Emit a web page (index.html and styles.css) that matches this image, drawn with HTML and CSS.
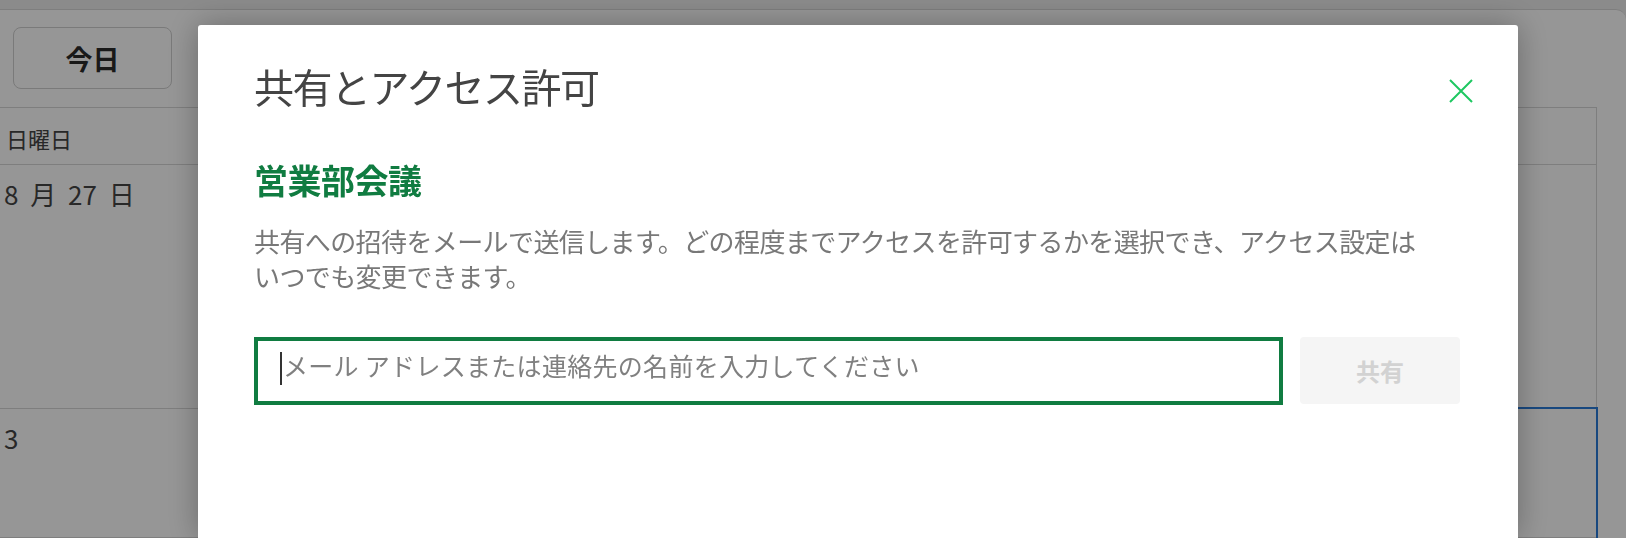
FILE: index.html
```html
<!DOCTYPE html>
<html lang="ja">
<head>
    <meta charset="UTF-8">
    <meta name="viewport" content="width=device-width, initial-scale=1.0">
    <title>共有とアクセス許可</title>
    <link rel="stylesheet" href="styles.css">
</head>
<body>
    <div class="app">
        <div class="toolbar">
            <button class="today-btn">今日</button>
        </div>

        <div class="calendar">
            <div class="cell head">日曜日</div>
            <div class="cell head">月曜日</div>
            <div class="cell head">火曜日</div>
            <div class="cell head">水曜日</div>
            <div class="cell head">木曜日</div>
            <div class="cell head">金曜日</div>
            <div class="cell head">土曜日</div>

            <div class="cell day">8 月 27 日</div>
            <div class="cell day">28</div>
            <div class="cell day">29</div>
            <div class="cell day">30</div>
            <div class="cell day">31</div>
            <div class="cell day">9 月 1 日</div>
            <div class="cell day">2</div>

            <div class="cell day">3</div>
            <div class="cell day">4</div>
            <div class="cell day">5</div>
            <div class="cell day">6</div>
            <div class="cell day">7</div>
            <div class="cell day">8</div>
            <div class="cell day selected">9</div>
        </div>
    </div>

    <div class="overlay">
        <div class="dialog">
            <div class="dialog-header">
                <h2>共有とアクセス許可</h2>
                <button class="close-btn" aria-label="閉じる">
                    <svg width="24" height="24" viewBox="0 0 24 24">
                        <path d="M1 1L23 23M23 1L1 23" stroke="#1ec761" stroke-width="2" fill="none"/>
                    </svg>
                </button>
            </div>

            <h3>営業部会議</h3>
            <p class="desc">共有への招待をメールで送信します。どの程度までアクセスを許可するかを選択でき、アクセス設定はいつでも変更できます。</p>

            <div class="share-row">
                <div class="email-box">
                    <span class="caret"></span>
                    <input type="text" placeholder="メール アドレスまたは連絡先の名前を入力してください">
                </div>
                <button class="share-btn">共有</button>
            </div>
        </div>
    </div>
</body>
</html>
```

FILE: styles.css
```css
html, body {
    margin: 0;
    height: 100%;
    overflow: hidden;
}
body {
    background-color: #ececec;
    font-family: "Noto Sans CJK JP", "Noto Sans", sans-serif;
    color: #444;
}
button {
    font-family: inherit;
}

/* calendar behind the dialog */
.app {
    margin-top: 9px;
    height: calc(100% - 9px);
    box-sizing: border-box;
    background-color: #fff;
    border-top: 1px solid #d7d7d7;
    border-top-right-radius: 10px;
}
.toolbar {
    height: 97px;
    box-sizing: border-box;
    padding: 17px 0 0 13px;
}
.today-btn {
    width: 159px;
    height: 62px;
    background-color: #fff;
    border: 1px solid #cfcfcf;
    border-radius: 8px;
    font-size: 27px;
    font-weight: bold;
    color: #2b2b2b;
}
.calendar {
    width: 1597px;
    height: calc(100% - 97px);
    box-sizing: border-box;
    display: grid;
    grid-template-columns: repeat(7, 1fr);
    grid-template-rows: 57px 244px 1fr;
    border-top: 1px solid #d7d7d7;
    border-right: 1px solid #d7d7d7;
}
.cell {
    border-bottom: 1px solid #d7d7d7;
    border-left: 1px solid #d7d7d7;
    color: #454545;
}
.cell:nth-child(7n + 1) {
    border-left: none;
}
.head {
    font-size: 22px;
    line-height: 26px;
    padding: 17px 0 0 6px;
}
.day {
    font-size: 26px;
    line-height: 31px;
    word-spacing: 6px;
    padding: 13px 0 0 4px;
}
.selected {
    outline: 2px solid #2a7bd8;
}

/* dialog */
.overlay {
    position: fixed;
    inset: 0;
    overflow: hidden;
    background-color: rgba(0, 0, 0, 0.41);
    padding: 25px 0 0 198px;
}
.dialog {
    width: 1320px;
    height: 100%;
    box-sizing: border-box;
    padding: 37px 58px 0 56px;
    background-color: #fff;
    border-radius: 3px 3px 0 0;
    box-shadow: 0 0 32px rgba(0, 0, 0, 0.3);
}
.dialog-header {
    display: flex;
    justify-content: space-between;
    align-items: flex-start;
}
.dialog-header h2 {
    margin: 0;
    font-size: 40px;
    line-height: 48px;
    font-weight: normal;
    letter-spacing: -1.5px;
    color: #444;
}
.close-btn {
    width: 24px;
    height: 24px;
    padding: 0;
    margin: 17px -13px 0 0;
    border: none;
    background: none;
    cursor: pointer;
}
.close-btn svg {
    display: block;
}
.dialog h3 {
    margin: 50px 0 0;
    font-size: 34px;
    line-height: 40px;
    font-weight: bold;
    letter-spacing: -0.5px;
    color: #107c41;
}
.desc {
    margin: 23px 0 0;
    max-width: 1185px;
    font-size: 26px;
    line-height: 35px;
    letter-spacing: -0.6px;
    color: #787878;
}
.share-row {
    display: flex;
    gap: 17px;
    margin-top: 44px;
}
.email-box {
    flex: 1;
    height: 68px;
    box-sizing: border-box;
    border: 4px solid #107c41;
    display: flex;
    align-items: center;
    padding: 0 0 12px 22px;
}
.caret {
    width: 2px;
    height: 33px;
    margin-top: 7px;
    background-color: #333;
}
.email-box input {
    flex: 1;
    height: 36px;
    padding: 0 0 0 1px;
    border: none;
    outline: none;
    background: transparent;
    font-family: inherit;
    font-size: 25px;
    letter-spacing: 0.3px;
    color: #333;
}
.email-box input::placeholder {
    color: #808080;
}
.share-btn {
    width: 160px;
    height: 67px;
    border: none;
    border-radius: 4px;
    background-color: #f5f5f5;
    color: #d2d2d2;
    font-size: 24px;
    font-weight: bold;
}
```
